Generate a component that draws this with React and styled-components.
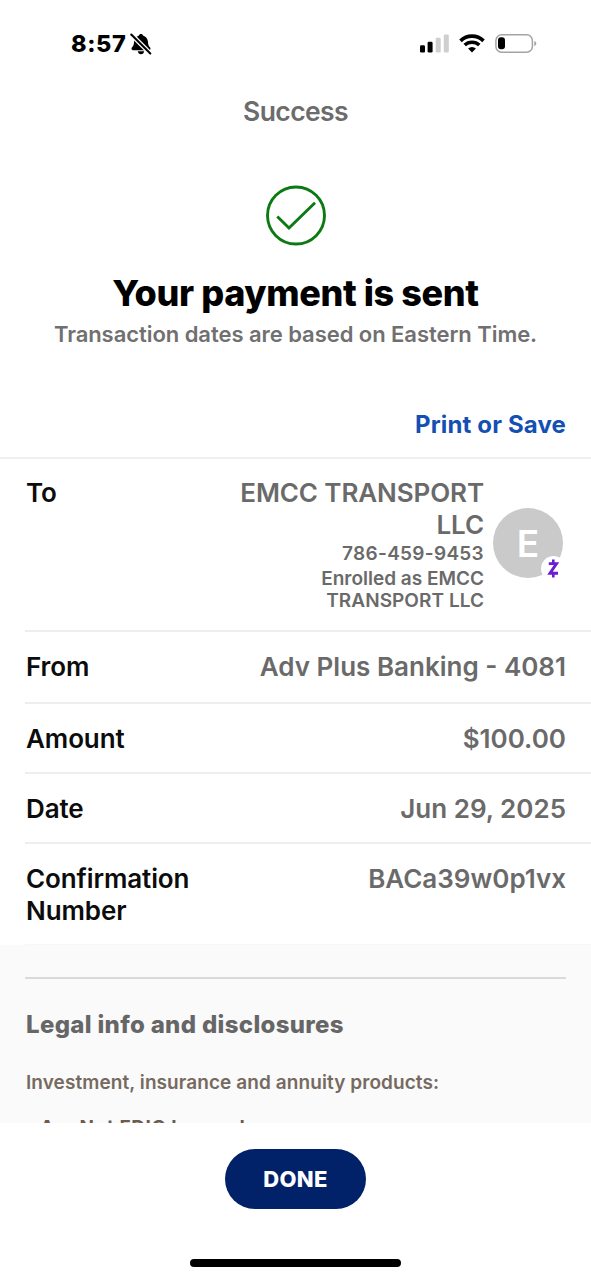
import React from 'react'
import styled, { createGlobalStyle } from 'styled-components'

const GlobalStyle = createGlobalStyle`
  * {
    box-sizing: border-box;
  }
  body {
    margin: 0;
    background-color: #fff;
    font-family: Inter, "Liberation Sans", sans-serif;
  }
`
const Screen = styled.div`
  width: 591px;
  height: 1280px;
  overflow: hidden;
  display: flex;
  flex-direction: column;
  background-color: #fff;
`
const StatusBar = styled.div`
  height: 88px;
  padding: 0 54px 0 71px;
  display: flex;
  align-items: center;
  justify-content: space-between;
`
const StatusGroup = styled.div`
  display: flex;
  align-items: center;
  gap: ${props => props.$gap}px;
`
const Clock = styled.span`
  font-size: 23.5px;
  font-weight: 800;
  line-height: 30px;
  letter-spacing: 0.6px;
`
const NavTitle = styled.div`
  height: 46px;
  line-height: 46px;
  text-align: center;
  font-size: 26.5px;
  font-weight: 600;
  letter-spacing: -0.6px;
  color: #6c6c6c;
`
const Hero = styled.div`
  height: 266px;
  padding-top: 51px;
  display: flex;
  flex-direction: column;
  align-items: center;
`
const Title = styled.h1`
  margin: 27px 0 0;
  line-height: 40px;
  font-size: 36px;
  font-weight: 800;
  letter-spacing: -0.38px;
  color: #000;
`
const Subtitle = styled.p`
  margin: 8px 0 0;
  line-height: 26px;
  font-size: 22px;
  font-weight: 600;
  letter-spacing: -0.05px;
  color: #707070;
`
const Actions = styled.div`
  height: 59px;
  padding: 8px 25px 0 0;
  display: flex;
  justify-content: flex-end;
  border-bottom: 2px solid #efefef;
`
const LinkButton = styled.button`
  height: 32px;
  padding: 0;
  border: 0;
  background: none;
  font-family: inherit;
  font-size: 24px;
  font-weight: 700;
  letter-spacing: 0.15px;
  color: #1450b4;
`
const Row = styled.div`
  height: ${props => props.$height}px;
  margin-left: 25px;
  padding: ${props => props.$top || 19}px 25px 0 1px;
  display: flex;
  justify-content: space-between;
  border-bottom: ${props => (props.$last ? '1px solid #f7f7f7' : '2px solid #eee')};
`
const Label = styled.span`
  width: 180px;
  line-height: 32px;
  font-size: 26px;
  font-weight: 600;
  letter-spacing: -0.1px;
  color: #0c0c0c;
`
const Value = styled.span`
  line-height: 32px;
  font-size: 26px;
  font-weight: 600;
  letter-spacing: ${props => props.$track || 0}px;
  text-align: right;
  color: #6a6a6a;
`
const Payee = styled.div`
  display: flex;
  align-items: flex-start;
  gap: 9px;
`
const PayeeText = styled.div`
  display: flex;
  flex-direction: column;
  align-items: flex-end;
`
const Detail = styled.span`
  line-height: ${props => props.$line}px;
  font-size: 19px;
  font-weight: 600;
  letter-spacing: ${props => props.$track || 0}px;
  color: #6a6a6a;
`
const Avatar = styled.div`
  position: relative;
  width: 70px;
  height: 70px;
  margin: 31px 3px 0 0;
  border-radius: 50%;
  background-color: #cacaca;
  color: #fff;
  font-size: 37px;
  font-weight: 600;
  line-height: 71px;
  text-align: center;
`
const Badge = styled.span`
  position: absolute;
  right: -3px;
  bottom: -3px;
  width: 25px;
  height: 25px;
  border-radius: 50%;
  background-color: #fff;
  display: flex;
  align-items: center;
  justify-content: center;
`
const Legal = styled.section`
  height: 178px;
  overflow: hidden;
  padding: 32px 25px 0;
  background-color: #fafafa;
`
const Rule = styled.hr`
  margin: 0;
  border: 0;
  border-top: 2px solid #d8dadb;
`
const LegalTitle = styled.h2`
  margin: 30px 0 0 1px;
  line-height: 32px;
  font-size: 24px;
  font-weight: 800;
  letter-spacing: 0.33px;
  color: #666;
`
const LegalText = styled.p`
  margin: 29px 0 0 1px;
  line-height: 26px;
  font-size: 19px;
  font-weight: 600;
  letter-spacing: 0.08px;
  color: #766a60;
`
const LegalItem = styled.p`
  margin: 19px 0 0 15px;
  line-height: 26px;
  font-size: 19px;
  font-weight: 700;
  letter-spacing: 0.58px;
  color: #6a5c4e;
`
const Footer = styled.footer`
  flex: 1;
  padding-top: 26px;
  display: flex;
  flex-direction: column;
  align-items: center;
  background-color: #fff;
`
const DoneButton = styled.button`
  width: 141px;
  height: 60px;
  padding: 0;
  border: 0;
  border-radius: 30px;
  background-color: #012169;
  color: #fff;
  font-family: inherit;
  font-size: 22px;
  font-weight: 800;
  letter-spacing: 0.3px;
`
const HomeIndicator = styled.div`
  width: 211px;
  height: 8px;
  margin-top: 50px;
  border-radius: 4px;
  background-color: #000;
`

const BellOff = () => (
  <svg width="22" height="22" viewBox="0 0 22 22">
    <path d="M11 1c1 0 1.800.6 2 1.400 2.800.8 4.700 3.200 4.900 6.200.2 3.600 1 4.800 2.200 6 .8.9.4 2.600-1 2.600H2.900c-1.400 0-1.800-1.700-1-2.600 1.200-1.200 2-2.400 2.200-6 .2-3 2.100-5.400 4.900-6.200.2-.8 1-1.400 2-1.400z" fill="#000" />
    <path d="M7.800 18.300h6.400c-.3 1.900-1.600 2.900-3.200 2.900s-2.900-1-3.200-2.900z" fill="#000" />
    <path d="M1.500 1.700l19 19" stroke="#fff" strokeWidth="4.600" />
    <path d="M1.300 1.500l19 19" stroke="#000" strokeWidth="2" strokeLinecap="round" />
  </svg>
)

const Signal = () => (
  <svg width="30" height="20" viewBox="0 0 30 20">
    <rect x="1" y="11.200" width="5" height="7.300" rx="1.300" fill="#000" />
    <rect x="8.600" y="7.800" width="5" height="10.700" rx="1.300" fill="#000" />
    <rect x="16.700" y="3.800" width="5" height="14.700" rx="1.300" fill="#cfcfcf" />
    <rect x="24.800" y="0.400" width="5" height="18.100" rx="1.300" fill="#cfcfcf" />
  </svg>
)

const Wifi = () => (
  <svg width="26" height="20" viewBox="0 0 26 20">
    <path d="M1.500 6.800a16.500 16.500 0 0 1 23 0" fill="none" stroke="#000" strokeWidth="3.700" />
    <path d="M5.700 11.100a10.500 10.500 0 0 1 14.600 0" fill="none" stroke="#000" strokeWidth="3.500" />
    <path d="M13 18.500l-3.900-3.900a5.600 5.600 0 0 1 7.800 0z" fill="#000" />
  </svg>
)

const Battery = () => (
  <svg width="42" height="20" viewBox="0 0 42 20">
    <rect x="0.900" y="0.800" width="36.500" height="17.400" rx="5.800" fill="none" stroke="#a4a4a4" strokeWidth="1.500" />
    <rect x="3" y="3.300" width="7" height="12" rx="3" fill="#000" />
    <path d="M39.300 6.900c1.300.4 2 1.400 2 2.600s-.7 2.200-2 2.600z" fill="#a4a4a4" />
  </svg>
)

const SuccessCheck = () => (
  <svg width="60" height="61" viewBox="0 0 60 61" fill="none" stroke="#0b7a12">
    <circle cx="30" cy="30.500" r="28.500" strokeWidth="2.900" />
    <path d="M11.300 31.500L23 43L49 17.800" strokeWidth="2.900" />
  </svg>
)

const Zelle = () => (
  <svg width="13" height="19" viewBox="0 0 13 19" fill="none" stroke="#6a1cd1">
    <path d="M1.800 4.600H9.500L3 14.200H11" strokeWidth="2.900" />
    <path d="M6.300 0.500V4M6.300 15V18.500" strokeWidth="2.600" />
  </svg>
)

export default function App() {
  return (
    <Screen>
      <GlobalStyle />
      <StatusBar>
        <StatusGroup $gap={4}>
          <Clock>8:57</Clock>
          <BellOff />
        </StatusGroup>
        <StatusGroup $gap={10}>
          <Signal />
          <Wifi />
          <Battery />
        </StatusGroup>
      </StatusBar>

      <NavTitle>Success</NavTitle>

      <Hero>
        <SuccessCheck />
        <Title>Your payment is sent</Title>
        <Subtitle>Transaction dates are based on Eastern Time.</Subtitle>
      </Hero>

      <Actions>
        <LinkButton>Print or Save</LinkButton>
      </Actions>

      <Row $height={173} $top={18}>
        <Label>To</Label>
        <Payee>
          <PayeeText>
            <Value $track={-0.1}>EMCC TRANSPORT<br />LLC</Value>
            <Detail $line={26} $track={0.3}>786-459-9453</Detail>
            <Detail $line={23}>Enrolled as EMCC</Detail>
            <Detail $line={22} $track={0.05}>TRANSPORT LLC</Detail>
          </PayeeText>
          <Avatar>
            E
            <Badge><Zelle /></Badge>
          </Avatar>
        </Payee>
      </Row>
      <Row $height={72}>
        <Label>From</Label>
        <Value>Adv Plus Banking - 4081</Value>
      </Row>
      <Row $height={70}>
        <Label>Amount</Label>
        <Value>$100.00</Value>
      </Row>
      <Row $height={70}>
        <Label>Date</Label>
        <Value>Jun 29, 2025</Value>
      </Row>
      <Row $height={101} $last>
        <Label>Confirmation Number</Label>
        <Value>BACa39w0p1vx</Value>
      </Row>

      <Legal>
        <Rule />
        <LegalTitle>Legal info and disclosures</LegalTitle>
        <LegalText>Investment, insurance and annuity products:</LegalText>
        <LegalItem>Are Not FDIC Insured</LegalItem>
      </Legal>

      <Footer>
        <DoneButton>DONE</DoneButton>
        <HomeIndicator />
      </Footer>
    </Screen>
  )
}
